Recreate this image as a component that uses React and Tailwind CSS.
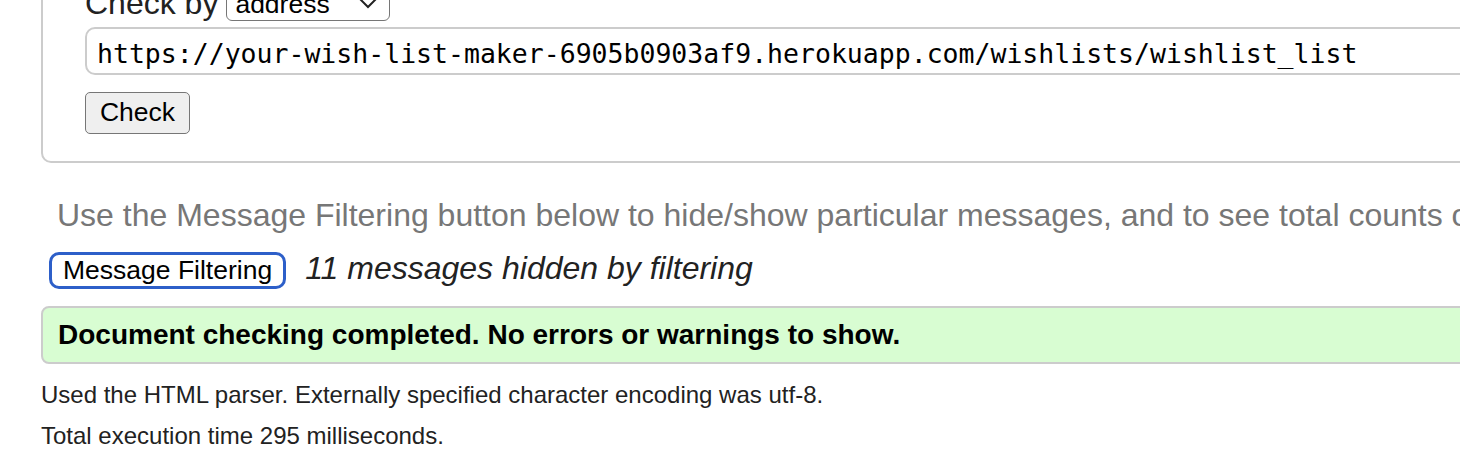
export default function App() {
  return (
    <div className="w-[1460px] h-[456px] overflow-hidden bg-white text-[#222] font-['Liberation_Sans',Arial,sans-serif]">
      <div className="w-[1800px] -mt-[40px]">
        <div className="ml-[41px] border-2 border-[#ccc] rounded-[10px] pl-[42px] pt-[15px] pb-[27px]">
          <div className="flex items-center h-[44px] text-[32px]">
            <span className="pt-[8px]">Check by</span>
            <div className="ml-[8px] flex items-center w-[164px] h-[44px] border-[1.5px] border-[#767676] rounded-[6px] pl-[8px] pr-[10px] text-[26.5px] text-black">
              <span className="flex-1 pt-[12px]">address</span>
              <svg className="mt-[8px]" width="22" height="14" viewBox="0 0 22 14" fill="none" stroke="#222" strokeWidth="2">
                <path d="M2 2 L11 11 L20 2" />
              </svg>
            </div>
          </div>
          <div className="mt-[6px] h-[48px] border-2 border-[#ccc] rounded-[10px] pl-[10px] pt-[6px] flex items-center font-['DejaVu_Sans_Mono',Menlo,monospace] text-[26.5px] text-black">
            https://your-wish-list-maker-6905b0903af9.herokuapp.com/wishlists/wishlist_list
          </div>
          <button className="mt-[17px] h-[42px] w-[105px] border-[1.5px] border-[#767676] rounded-[5px] bg-[#efefef] text-[26.5px] text-black flex items-center justify-center">
            Check
          </button>
        </div>

        <p className="ml-[57px] mt-[32px] text-[32px] leading-[40px] text-[#777] whitespace-nowrap">
          Use the Message Filtering button below to hide/show particular messages, and to see total counts of errors and warnings.
        </p>

        <div className="ml-[49px] mt-[9px] flex items-baseline">
          <button className="h-[37px] border-[3px] border-[#2d5fc9] rounded-[10px] px-[11px] text-[26.5px] text-black bg-white leading-none">
            Message Filtering
          </button>
          <span className="ml-[19px] text-[32px] italic text-[#222]">11 messages hidden by filtering</span>
        </div>

        <div className="ml-[41px] mt-[14px] h-[58px] border-2 border-[#ccc] rounded-[8px] bg-[#d8fdd2] pl-[15px] flex items-center text-[28px] font-bold text-black">
          Document checking completed. No errors or warnings to show.
        </div>

        <div className="ml-[41px] mt-[10px] text-[24px] leading-[41px] text-[#222]">
          <p>Used the HTML parser. Externally specified character encoding was utf-8.</p>
          <p>Total execution time 295 milliseconds.</p>
        </div>
      </div>
    </div>
  );
}
